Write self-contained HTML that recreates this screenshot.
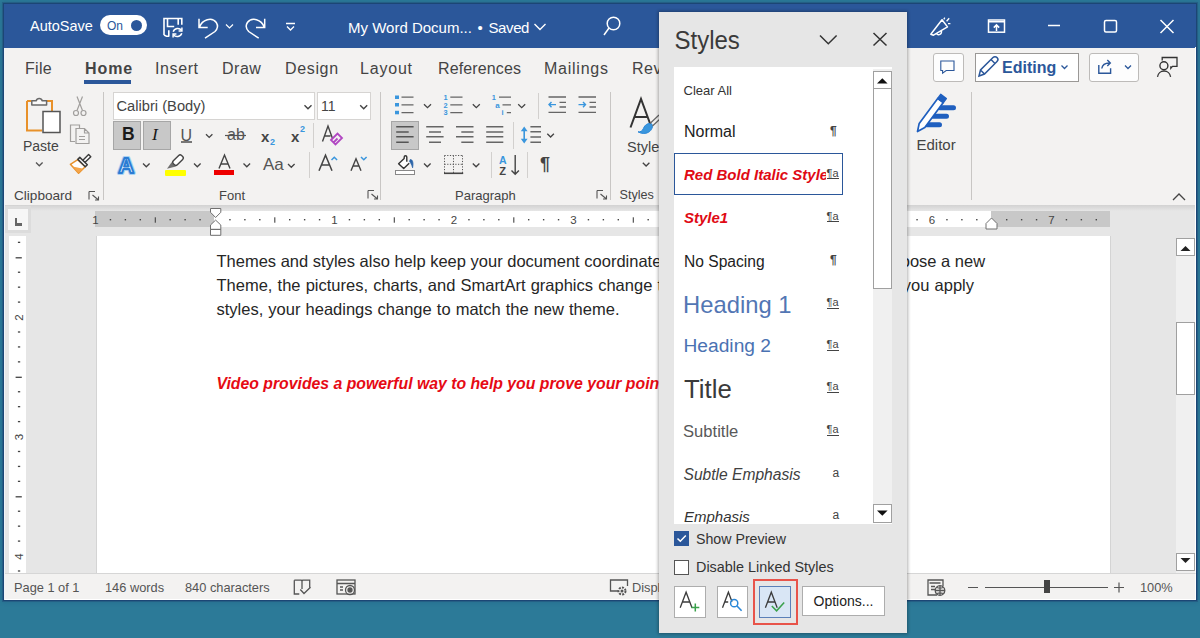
<!DOCTYPE html>
<html><head><meta charset="utf-8">
<style>
*{margin:0;padding:0;box-sizing:border-box}
html,body{width:1200px;height:638px;overflow:hidden;background:#2c7a98;font-family:"Liberation Sans",sans-serif;position:relative}
.a{position:absolute}
.t{position:absolute;white-space:nowrap;line-height:1}
svg.L{position:absolute;left:0;top:0;width:1200px;height:638px;overflow:visible}
.tab{position:absolute;top:60.5px;font-size:16px;color:#444;white-space:nowrap;line-height:1}
.lbl{position:absolute;font-size:13px;color:#444;white-space:nowrap;line-height:1}
</style></head><body>
<!-- window -->
<div class="a" style="left:4px;top:3.5px;width:1192px;height:596.5px;background:#f3f2f1;box-shadow:0 0 0 1px rgba(25,60,110,.7),0 0 0 2px rgba(30,75,120,.45),0 0 4px 2px rgba(25,70,120,.3);border-left:1px solid #eef3f8"></div>
<!-- title bar -->
<div class="a" style="left:4px;top:3.5px;width:1192px;height:44.1px;background:#2b579a"></div>
<div class="t" style="left:30px;top:18.5px;font-size:14.5px;color:#fff">AutoSave</div>
<div class="a" style="left:100px;top:15px;width:47px;height:20px;border-radius:10px;background:#fff"></div>
<div class="t" style="left:107px;top:20px;font-size:12px;color:#2b579a">On</div>
<div class="a" style="left:131px;top:19.5px;width:11px;height:11px;border-radius:50%;background:#2b579a"></div>
<div class="t" style="left:348px;top:20px;font-size:15px;color:#fff">My Word Docum...</div><div class="t" style="left:477.5px;top:20px;font-size:15px;color:#fff">•</div><div class="t" style="left:488.5px;top:20px;font-size:15px;color:#fff;letter-spacing:-0.4px">Saved</div>
<svg class="L" fill="none" stroke="#fff" stroke-width="1.5">
 <!-- save -->
 <path d="M164 35V18.5H181.8V24.7 M164 35L166.5 36.2H169.3 M167.5 18.5V26.5H174.2 M178.2 18.5V24.7 M168.8 30.3V36.2" stroke-width="1.6"/>
 <path d="M173.2 31.8A4.8 4.8 0 0 1 181.6 30.4 M181.8 33.2A4.8 4.8 0 0 1 173.4 34.6" stroke-width="1.5"/>
 <path d="M181.9 27.6V30.9H178.6 M173.1 37.4V34.1H176.4" stroke-width="1.5"/>
 <!-- undo -->
 <path d="M199 18.8v8.7h8.7 M199.6 27C202 19.5 212 16.5 216.3 22.5C218.5 26 217.5 29 215 31.5L205 38.2"/>
 <path d="M226 24.5l3.5 3.5 3.5-3.5" stroke-width="1.2"/>
 <!-- redo -->
 <path d="M264.7 18.8v8.7h-8.7 M264.1 27C261.7 19.5 251.7 16.5 247.4 22.5C245.2 26 246.2 29 248.7 31.5L258.7 38.2"/>
 <!-- customize -->
 <path d="M286 23.5h9 M287 26.5l3.5 3.5 3.5-3.5" stroke-width="1.3"/>
 <!-- title chevron -->
 <path d="M534.5 24l5.5 5.5 5.5-5.5" stroke-width="1.4"/>
 <!-- search -->
 <circle cx="613.5" cy="23.5" r="6.3"/>
 <path d="M609 28l-5 7"/>
 <!-- megaphone -->
 <path d="M930.8 34.2l11.2-14.5 5.5 7.2-14 8.3z M936.2 33.2a2.6 2.6 0 0 0 5 -2.5" stroke-linejoin="round"/>
 <path d="M943.8 19.4l1-1.8 M946.6 21.2l2.6-3 M948 23.6h2.4" stroke-width="1.3"/>
 <!-- ribbon display -->
 <rect x="988.5" y="20" width="16" height="12.2"/>
 <path d="M988.5 21.8h16 M996.5 31v-6 M993.8 27.6l2.7-2.7 2.7 2.7"/>
 <!-- min max close -->
 <path d="M1048 25.5h12"/>
 <rect x="1104.5" y="20.5" width="12" height="11.5" rx="1.5"/>
 <path d="M1160.5 20l13 13 M1173.5 20l-13 13"/>
</svg>
<!-- ribbon tabs -->
<div class="tab" style="left:25px;letter-spacing:0.3px">File</div>
<div class="tab" style="left:85px;font-weight:bold;letter-spacing:0.9px">Home</div>
<div class="a" style="left:84px;top:80px;width:47px;height:4px;background:#2b579a"></div>
<div class="tab" style="left:155px;letter-spacing:0.6px">Insert</div>
<div class="tab" style="left:222px;letter-spacing:0.5px">Draw</div>
<div class="tab" style="left:285px;letter-spacing:0.65px">Design</div>
<div class="tab" style="left:360px;letter-spacing:0.8px">Layout</div>
<div class="tab" style="left:438px;letter-spacing:0.12px">References</div>
<div class="tab" style="left:544px;letter-spacing:0.75px">Mailings</div>
<div class="tab" style="left:632px;letter-spacing:0.5px">Review</div>
<!-- right buttons -->
<div class="a" style="left:932.5px;top:52.5px;width:31.5px;height:29px;border:1px solid #bdbbb9;border-radius:3px;background:#fdfdfd"></div>
<div class="a" style="left:974.5px;top:52.5px;width:104px;height:29px;border:1px solid #9a9896;background:#fff"></div>
<div class="t" style="left:1002px;top:60px;font-size:16px;font-weight:bold;color:#2b579a">Editing</div>
<div class="a" style="left:1088.5px;top:52.5px;width:50px;height:29px;border:1px solid #bdbbb9;border-radius:3px;background:#fdfdfd"></div>
<svg class="L" fill="none" stroke="#2b579a" stroke-width="1.3">
 <path d="M940.8 61h13.2v9.5h-7.8l-3.6 2.6v-2.6h-1.8z" stroke-width="1.1"/>
 <path d="M979 76l1.5-6 12.5-12.5a2.5 2.5 0 0 1 4 4l-12.5 12.5z M991 59.5l4 4 M980.5 70l4.5 4.5" stroke-width="1.5"/>
 <path d="M1061.5 65.5l3 3 3-3" stroke-width="1.3"/>
 <path d="M1098.8 65V73.3H1110.6V68.2 M1101.8 68.5C1102.3 64.8 1105 63 1109.5 63 M1107.3 60L1110.3 63L1107.3 66" stroke-width="1.4"/>
 <path d="M1125 65.5l3 3 3-3" stroke-width="1.3"/>
</svg>
<svg class="L" fill="none" stroke="#333" stroke-width="1.4">
 <circle cx="1163.9" cy="65.8" r="4"/>
 <path d="M1157.5 76.8A6.6 6.6 0 0 1 1170.6 76.8 M1162.2 60.5V57.5H1177V66.3H1172.5L1170.8 68.3V66.3" stroke-width="1.3"/>
</svg>
<!-- ===== RIBBON ===== -->
<!-- separators -->
<div class="a" style="left:103px;top:92px;width:1px;height:108px;background:#c8c6c4"></div>
<div class="a" style="left:380px;top:92px;width:1px;height:108px;background:#c8c6c4"></div>
<div class="a" style="left:610px;top:92px;width:1px;height:108px;background:#c8c6c4"></div>
<div class="a" style="left:971px;top:92px;width:1px;height:108px;background:#c8c6c4"></div>
<div class="a" style="left:313px;top:123px;width:1px;height:25px;background:#d2d0ce"></div>
<div class="a" style="left:309px;top:152px;width:1px;height:26px;background:#d2d0ce"></div>
<div class="a" style="left:538px;top:93px;width:1px;height:26px;background:#d2d0ce"></div>
<div class="a" style="left:512.5px;top:122px;width:1px;height:27px;background:#d2d0ce"></div>
<div class="a" style="left:491px;top:152px;width:1px;height:26px;background:#d2d0ce"></div>
<div class="a" style="left:527px;top:152px;width:1px;height:26px;background:#d2d0ce"></div>
<!-- group labels -->
<div class="lbl" style="left:14px;top:188.6px;font-size:13.6px">Clipboard</div>
<div class="lbl" style="left:219px;top:189px">Font</div>
<div class="lbl" style="left:455px;top:189px">Paragraph</div>
<div class="lbl" style="left:619.5px;top:189px;font-size:12.6px">Styles</div>
<div class="lbl" style="left:23px;top:139px;font-size:14px">Paste</div>
<div class="lbl" style="left:627px;top:139.5px;font-size:14.5px">Styles</div>
<div class="lbl" style="left:916.5px;top:137px;font-size:15px">Editor</div>
<!-- font boxes -->
<div class="a" style="left:113px;top:92px;width:202px;height:28px;background:#fff;border:1px solid #d6d4d2"></div>
<div class="t" style="left:116.5px;top:98.5px;font-size:14.7px;color:#444">Calibri (Body)</div>
<div class="a" style="left:317px;top:92px;width:54px;height:28px;background:#fff;border:1px solid #d6d4d2"></div>
<div class="t" style="left:321px;top:99px;font-size:14px;color:#444">11</div>
<!-- B I -->
<div class="a" style="left:113px;top:121px;width:28px;height:29px;background:#c8c8c8;border:1px solid #a6a6a6"></div>
<div class="a" style="left:143px;top:121px;width:28px;height:29px;background:#c8c8c8;border:1px solid #a6a6a6"></div>
<div class="t" style="left:122px;top:126.2px;font-size:17.5px;font-weight:bold;color:#1a1a1a">B</div>
<div class="t" style="left:152px;top:126px;font-size:17.5px;font-style:italic;font-family:'Liberation Serif',serif;color:#1a1a1a">I</div>
<div class="t" style="left:180.5px;top:127.5px;font-size:16px;color:#555">U</div>
<div class="a" style="left:181px;top:141px;width:11px;height:1.6px;background:#777"></div>
<div class="t" style="left:227px;top:127px;font-size:16px;color:#555">ab</div>
<div class="t" style="left:261px;top:129px;font-size:15px;font-weight:bold;color:#444">x</div>
<div class="t" style="left:270px;top:138px;font-size:9px;font-weight:bold;color:#3a96dd">2</div>
<div class="t" style="left:291px;top:129px;font-size:15px;font-weight:bold;color:#444">x</div>
<div class="t" style="left:300px;top:124.5px;font-size:9px;font-weight:bold;color:#3a96dd">2</div>
<!-- highlighted align left -->
<div class="a" style="left:391px;top:121px;width:28px;height:29px;background:#c8c8c8;border:1px solid #a6a6a6"></div>
<!-- color bars -->
<div class="a" style="left:164.5px;top:170px;width:21.5px;height:5.5px;background:#ffff00;border-radius:1px"></div>
<div class="a" style="left:214px;top:170px;width:20px;height:5px;background:#e00"></div>
<div class="t" style="left:263px;top:156px;font-size:17px;color:#555">Aa</div>
<div class="t" style="left:540px;top:155px;font-size:18px;font-weight:bold;color:#444">¶</div>
<svg class="L" fill="none" stroke="#555" stroke-width="1.3">
 <!-- paste clipboard -->
 <path d="M27 101h4.5 M45.5 101h6.5v10 M27 101v29.5h15" stroke="#e8912a" stroke-width="2"/>
 <path d="M31.8 105v-4.3h4.4a3.1 3.1 0 0 1 6 0h4.4v4.3z" stroke="#6a6a6a" fill="#fafafa" stroke-width="1.5" stroke-linejoin="round"/>
 <rect x="43" y="111.5" width="17" height="21" fill="#fff" stroke="#555" stroke-width="1.5"/>
 <path d="M36 162.5l3.3 3.3 3.3-3.3" stroke="#555"/>
 <!-- scissors -->
 <g stroke="#a19f9d" stroke-width="1.2"><circle cx="76" cy="113" r="2.5"/><circle cx="83.5" cy="113" r="2.5"/><path d="M77 110.5l5.5-14 M82.5 110.5l-5.5-14"/></g>
 <!-- copy -->
 <g stroke="#a19f9d" stroke-width="1.2"><path d="M75 141.5h-4.5v-16.5h9v3"/><path d="M76 128.5h8.5l4.5 4.5v10.5h-13z M84.5 128.5v4.5h4.5 M79 136.5h6 M79 139.5h6"/></g>
 <!-- format painter -->
 <path d="M70.4 164.3L77.8 159.6L85.2 166.8L78.6 173.2Z" fill="#fff" stroke="#e8912a" stroke-width="1.5" stroke-linejoin="round"/>
 <path d="M72.6 166.4L83.4 168.8L78.6 173Z" fill="#f5a54a" stroke="none"/>
 <path d="M82.6 160.4L88.6 154.6L90.8 156.8L84.8 162.6Z" fill="#fff" stroke="#3a3a3a" stroke-width="1.4" stroke-linejoin="round"/>
 <path d="M77.8 159.4L79.8 157.4L87.3 164.7L85.3 166.7Z" fill="#fff" stroke="#3a3a3a" stroke-width="1.5" stroke-linejoin="round"/>
 <!-- launchers -->
 <path d="M89 191.5h6 M89 191.5v8 M92.5 195l6 5 M98.5 196.5v3.5h-3.5" stroke="#555" stroke-width="1.1"/>
 <path d="M368 190.5h6 M368 190.5v8 M371.5 194l6 5 M377.5 195.5v3.5h-3.5" stroke="#555" stroke-width="1.1"/>
 <path d="M597 190.5h6 M597 190.5v8 M600.5 194l6 5 M606.5 195.5v3.5h-3.5" stroke="#555" stroke-width="1.1"/>
 <!-- font dropdown chevrons -->
 <path d="M304.5 105.2l3.5 3.5 3.5-3.5 M360.2 105.2l3.5 3.5 3.5-3.5" stroke="#444" stroke-width="1.4"/>
 <!-- U chev, row chevrons -->
 <path d="M206 134.2l3.2 3.2 3.2-3.2" stroke="#444"/>
 <path d="M143 163.5l3.3 3.3 3.3-3.3 M194 163.5l3.3 3.3 3.3-3.3 M243.5 163.5l3.3 3.3 3.3-3.3 M288 164l3.3 3.3 3.3-3.3" stroke="#444"/>
 <!-- strike -->
 <path d="M225 135.5h21" stroke="#555" stroke-width="1.2"/>
 <!-- clear formatting A -->
 <path d="M322.5 141.5l5.5-15.5 4.5 12.5 M324.5 136h6" stroke="#444" stroke-width="1.4"/>
 <path d="M331 140l6.5-6.5 4.5 4.5-6.5 6.5z M333.5 142.5l4-4" stroke="#b146c2" stroke-width="1.8"/>
 <!-- text effects A -->
 <text x="118.3" y="172.6" font-family="Liberation Sans" font-weight="bold" font-size="22" fill="#d6e9f8" stroke="#a9d1f2" stroke-width="4" stroke-linejoin="round">A</text>
 <text x="118.3" y="172.6" font-family="Liberation Sans" font-weight="bold" font-size="22" fill="#eef6fd" stroke="#2b7cd3" stroke-width="2" stroke-linejoin="round">A</text>
 <!-- highlighter -->
 <path d="M167 168.8L171.6 162.2L175.9 166.5Z" fill="#6f6f6f" stroke="none"/>
 <rect x="172.2" y="157.3" width="11.6" height="5.6" rx="2" transform="rotate(-45 178 160.1)" fill="#fff" stroke="#444" stroke-width="1.4"/>
 <!-- font color A -->
 <path d="M219 168.5l5.5-13.5 5.5 13.5 M221 164h7" stroke="#444" stroke-width="1.4"/>
 <!-- grow/shrink -->
 <path d="M319 170.7l6.5-15.5 6.5 15.5 M321.5 165h8" stroke="#444" stroke-width="1.5"/>
 <path d="M331.5 160l2.8-2.8 2.8 2.8" stroke="#3a96dd" stroke-width="1.5"/>
 <path d="M351 170.7l5-12 5 12 M353 166h6" stroke="#444" stroke-width="1.4"/>
 <path d="M361 157l2.8 2.8 2.8-2.8" stroke="#3a96dd" stroke-width="1.5"/>
 <!-- bullets -->
 <g fill="#3a96dd" stroke="none"><rect x="395" y="95.5" width="4" height="3.5"/><rect x="395" y="103" width="4" height="3.5"/><rect x="395" y="110.8" width="4" height="3.5"/></g>
 <path d="M401.5 97.2h12 M401.5 104.8h12 M401.5 112.6h12" stroke="#666" stroke-width="1.3"/>
 <path d="M424 104.2l3.5 3.5 3.5-3.5 M472.8 104.2l3.5 3.5 3.5-3.5 M518.2 104.2l3.5 3.5 3.5-3.5" stroke="#444" stroke-width="1.3"/>
 <!-- numbering -->
 <path d="M450.3 97.2h12.2 M450.3 104.8h12.2 M450.3 112.6h12.2" stroke="#666" stroke-width="1.3"/>
 <g fill="#3a96dd" stroke="none" font-size="7.4" font-family="Liberation Sans" font-weight="bold"><text x="443.4" y="100.4">1</text><text x="443.4" y="107.9">2</text><text x="443.4" y="115.4">3</text></g>
 <!-- multilevel -->
 <path d="M499 97.2h12 M502.5 104.8h8.5 M506.8 112.6h4.2" stroke="#666" stroke-width="1.3"/>
 <g fill="#3a96dd" stroke="none" font-size="7.4" font-family="Liberation Sans" font-weight="bold"><text x="491.8" y="100.4">1</text><text x="495.2" y="107.9" font-size="8">a</text><text x="501.6" y="115">i</text></g>
 <!-- indents -->
 <path d="M548.5 97h17.5 M559.5 102.4h6.5 M559.5 107h6.5 M548.5 112.3h17.5" stroke="#666" stroke-width="1.3"/>
 <path d="M556 104.6h-7 M551.5 102l-2.5 2.6 2.5 2.6" stroke="#3a96dd" stroke-width="1.4"/>
 <path d="M578.5 97h17.5 M589.5 102.4h6.5 M589.5 107h6.5 M578.5 112.3h17.5" stroke="#666" stroke-width="1.3"/>
 <path d="M578.5 104.6h7 M583 102l2.5 2.6-2.5 2.6" stroke="#3a96dd" stroke-width="1.4"/>
 <!-- align -->
 <path d="M396.2 126.8h17.4 M396.2 132h12.5 M396.2 136.8h17.4 M396.2 142.2h12.5" stroke="#555" stroke-width="1.5"/>
 <path d="M426.2 126.8h17.4 M429 132h12 M426.2 136.8h17.4 M429 142.2h12" stroke="#666" stroke-width="1.5"/>
 <path d="M456 126.8h17.5 M461.3 132h12.2 M456 136.8h17.5 M461.3 142.2h12.2" stroke="#666" stroke-width="1.5"/>
 <path d="M486.2 126.8h17.1 M486.2 132h17.1 M486.2 136.8h17.1 M486.2 142.2h17.1" stroke="#666" stroke-width="1.5"/>
 <!-- line spacing -->
 <path d="M530.4 126.8h10.6 M530.4 131.8h10.6 M530.4 136.9h10.6 M530.4 142.2h10.6" stroke="#666" stroke-width="1.5"/>
 <path d="M524.2 129v12" stroke="#3a96dd" stroke-width="1.6"/>
 <path d="M520.8 131.2l3.4-4.6 3.4 4.6z M520.8 138.8l3.4 4.6 3.4-4.6z" fill="#3a96dd" stroke="none"/>
 <path d="M547.3 133.7l3.3 3.3 3.3-3.3" stroke="#444" stroke-width="1.3"/>
 <!-- shading -->
 <path d="M404.2 158.6L398.6 163.8L403.7 168.6L409.2 163.2 M404.2 158.8V157A1.3 1.3 0 0 1 406.8 157V161.8" stroke="#333" stroke-width="1.4" stroke-linejoin="round" fill="#fff"/>
 <path d="M410.2 159.6C412.4 159.3 413.6 162.2 412.6 167.8C411.8 164.5 410.6 162.8 409.6 161.6Z" fill="#2b64a8" stroke="#2b64a8" stroke-width=".8"/>
 <rect x="395.5" y="170.5" width="19" height="4" fill="#fff" stroke="#888" stroke-width="1"/>
 <path d="M424 163.5l3.3 3.3 3.3-3.3 M472.8 163.5l3.3 3.3 3.3-3.3" stroke="#444" stroke-width="1.3"/>
 <!-- borders -->
 <path d="M444.5 155.5h18 M444.5 155.5v17.5 M462.5 155.5v17.5 M453.5 155.5v17.5 M444.5 164.3h18" stroke="#555" stroke-width="1" stroke-dasharray="1.2 1.5"/>
 <path d="M444 173.3h19.2" stroke="#444" stroke-width="1.6"/>
 <!-- sort -->
 <g font-family="Liberation Sans" font-weight="bold" stroke="none"><text x="499" y="163.5" font-size="10.5" fill="#3a96dd">A</text><text x="499.2" y="174.5" font-size="11" fill="#444">Z</text></g>
 <path d="M515.2 155v19 M511.5 170.5l3.7 3.7 3.7-3.7" stroke="#444" stroke-width="1.4"/>
 <!-- styles A -->
 <path d="M630.5 127.5l10.5-28.5 10.5 28.5 M634.5 117h13" stroke="#333" stroke-width="2"/>
 <path d="M638 131.8c2.5 .5 4.5-1 5.5-3.5 1.3-3.5 4.5-5.5 8-4.5 2 2 .5 6.5-3 8.5-3 1.8-7.5 1.5-10.5-.5z" fill="#3a96dd" stroke="#2b88d8" stroke-width="1"/>
 <path d="M650 123.5l9-8.5 M652.5 126l8-7.5" stroke="#666" stroke-width="1.2"/>
 <path d="M642.8 162.7l3.3 3.3 3.3-3.3" stroke="#444" stroke-width="1.3"/>
 <!-- editor -->
 <path d="M940 107.7h13.5 M933 116.3h13.5 M926.5 124.7h13" stroke="#1f5fbf" stroke-width="5" stroke-linecap="round"/>
 <path d="M917.5 131.5l1.7-8.1 18.5-25 5.6 4.2-18.5 25z" fill="#fff" stroke="#1f5fbf" stroke-width="1.7" stroke-linejoin="round"/>
 <path d="M937.7 98.4l3-4 5.6 4.2-3 4z" fill="#1f5fbf" stroke="#1f5fbf" stroke-width="1.5" stroke-linejoin="round"/>
 <!-- collapse -->
 <path d="M1173 200l6-6 6 6" stroke="#444" stroke-width="1.3"/>
</svg>
<!-- ===== DOC AREA ===== -->
<div class="a" style="left:5px;top:205px;width:1191px;height:368px;background:#e6e6e6"></div>
<div class="a" style="left:5px;top:205px;width:1191px;height:6px;background:linear-gradient(#d2d2d2,#e6e6e6)"></div>
<!-- tab selector -->
<div class="a" style="left:5px;top:206px;width:26px;height:27px;background:#dcdcdc"></div>
<div class="a" style="left:8px;top:209px;width:20px;height:20.5px;background:#f6f6f6"></div>
<div class="a" style="left:14.5px;top:218px;width:2.2px;height:7.5px;background:#666"></div>
<div class="a" style="left:14.5px;top:223px;width:7px;height:2.5px;background:#666"></div>
<!-- horizontal ruler -->
<div class="a" style="left:95px;top:211px;width:1015px;height:16px;background:#fff"></div>
<div class="a" style="left:95px;top:211px;width:119px;height:16px;background:#c8c8c8"></div>
<div class="a" style="left:991px;top:211px;width:119px;height:16px;background:#c8c8c8"></div>
<!-- vertical ruler -->
<div class="a" style="left:9px;top:236px;width:16.5px;height:337px;background:#fff"></div>
<!-- page -->
<div class="a" style="left:97px;top:236px;width:1013px;height:337px;background:#fff;box-shadow:1px 0 0 #d4d4d4,-1px 0 0 #d4d4d4"></div>
<!-- scrollbar -->
<div class="a" style="left:1176px;top:238px;width:19.5px;height:335px;background:#f0f0f0"></div>
<div class="a" style="left:1176px;top:238px;width:19px;height:18px;background:#fff;border:1px solid #a0a0a0"></div>
<div class="a" style="left:1176px;top:322px;width:19px;height:73px;background:#fff;border:1px solid #a0a0a0"></div>
<div class="a" style="left:1176px;top:553px;width:19px;height:18px;background:#fff;border:1px solid #a0a0a0"></div>
<svg class="L" stroke="none" fill="#222">
 <path d="M1180.5 251l5-5 5 5z"/>
 <path d="M1180.5 558l5 5 5-5z"/>
</svg>
<svg class="L" fill="none" stroke="#555" stroke-width="1">
 <g fill="#444" stroke="none" font-size="11.5" font-family="Liberation Sans"><text x="95.5" y="224" text-anchor="middle">1</text><rect x="109.74" y="219" width="1.4" height="1.4"/><rect x="124.67999999999999" y="219" width="1.4" height="1.4"/><rect x="139.61" y="219" width="1.4" height="1.4"/><rect x="154.75" y="217.3" width="1.1" height="5.4"/><rect x="169.49" y="219" width="1.4" height="1.4"/><rect x="184.42000000000002" y="219" width="1.4" height="1.4"/><rect x="199.36" y="219" width="1.4" height="1.4"/><rect x="229.24" y="219" width="1.4" height="1.4"/><rect x="244.18" y="219" width="1.4" height="1.4"/><rect x="259.11" y="219" width="1.4" height="1.4"/><rect x="274.25" y="217.3" width="1.1" height="5.4"/><rect x="288.99" y="219" width="1.4" height="1.4"/><rect x="303.92" y="219" width="1.4" height="1.4"/><rect x="318.86" y="219" width="1.4" height="1.4"/><text x="334.5" y="224" text-anchor="middle">1</text><rect x="348.74" y="219" width="1.4" height="1.4"/><rect x="363.68" y="219" width="1.4" height="1.4"/><rect x="378.61" y="219" width="1.4" height="1.4"/><rect x="393.75" y="217.3" width="1.1" height="5.4"/><rect x="408.49" y="219" width="1.4" height="1.4"/><rect x="423.42" y="219" width="1.4" height="1.4"/><rect x="438.36" y="219" width="1.4" height="1.4"/><text x="454.0" y="224" text-anchor="middle">2</text><rect x="468.24" y="219" width="1.4" height="1.4"/><rect x="483.18" y="219" width="1.4" height="1.4"/><rect x="498.11" y="219" width="1.4" height="1.4"/><rect x="513.25" y="217.3" width="1.1" height="5.4"/><rect x="527.99" y="219" width="1.4" height="1.4"/><rect x="542.92" y="219" width="1.4" height="1.4"/><rect x="557.8599999999999" y="219" width="1.4" height="1.4"/><text x="573.5" y="224" text-anchor="middle">3</text><rect x="587.74" y="219" width="1.4" height="1.4"/><rect x="602.68" y="219" width="1.4" height="1.4"/><rect x="617.6099999999999" y="219" width="1.4" height="1.4"/><rect x="632.75" y="217.3" width="1.1" height="5.4"/><rect x="647.49" y="219" width="1.4" height="1.4"/><rect x="662.42" y="219" width="1.4" height="1.4"/><rect x="677.3599999999999" y="219" width="1.4" height="1.4"/><text x="693.0" y="224" text-anchor="middle">4</text><rect x="707.24" y="219" width="1.4" height="1.4"/><rect x="722.18" y="219" width="1.4" height="1.4"/><rect x="737.1099999999999" y="219" width="1.4" height="1.4"/><rect x="752.25" y="217.3" width="1.1" height="5.4"/><rect x="766.99" y="219" width="1.4" height="1.4"/><rect x="781.92" y="219" width="1.4" height="1.4"/><rect x="796.8599999999999" y="219" width="1.4" height="1.4"/><text x="812.5" y="224" text-anchor="middle">5</text><rect x="826.74" y="219" width="1.4" height="1.4"/><rect x="841.68" y="219" width="1.4" height="1.4"/><rect x="856.6099999999999" y="219" width="1.4" height="1.4"/><rect x="871.75" y="217.3" width="1.1" height="5.4"/><rect x="886.49" y="219" width="1.4" height="1.4"/><rect x="901.42" y="219" width="1.4" height="1.4"/><rect x="916.3599999999999" y="219" width="1.4" height="1.4"/><text x="932.0" y="224" text-anchor="middle">6</text><rect x="946.24" y="219" width="1.4" height="1.4"/><rect x="961.18" y="219" width="1.4" height="1.4"/><rect x="976.1099999999999" y="219" width="1.4" height="1.4"/><rect x="1005.99" y="219" width="1.4" height="1.4"/><rect x="1020.92" y="219" width="1.4" height="1.4"/><rect x="1035.86" y="219" width="1.4" height="1.4"/><text x="1051.5" y="224" text-anchor="middle">7</text><rect x="1065.74" y="219" width="1.4" height="1.4"/><rect x="1080.68" y="219" width="1.4" height="1.4"/><rect x="1095.61" y="219" width="1.4" height="1.4"/><rect x="17.9" y="241.71" width="2.3" height="1.3"/><rect x="15.6" y="257.15" width="6.2" height="1.3"/><rect x="17.9" y="271.59" width="2.3" height="1.3"/><rect x="17.9" y="286.52" width="2.3" height="1.3"/><rect x="17.9" y="301.46" width="2.3" height="1.3"/><text x="18.5" y="317.5" text-anchor="middle" dominant-baseline="central" transform="rotate(-90 18.5 317.5)">2</text><rect x="17.9" y="331.34" width="2.3" height="1.3"/><rect x="17.9" y="346.28" width="2.3" height="1.3"/><rect x="17.9" y="361.21" width="2.3" height="1.3"/><rect x="15.6" y="376.65" width="6.2" height="1.3"/><rect x="17.9" y="391.09" width="2.3" height="1.3"/><rect x="17.9" y="406.02" width="2.3" height="1.3"/><rect x="17.9" y="420.96" width="2.3" height="1.3"/><text x="18.5" y="437.0" text-anchor="middle" dominant-baseline="central" transform="rotate(-90 18.5 437.0)">3</text><rect x="17.9" y="450.84" width="2.3" height="1.3"/><rect x="17.9" y="465.78" width="2.3" height="1.3"/><rect x="17.9" y="480.71" width="2.3" height="1.3"/><rect x="15.6" y="496.15" width="6.2" height="1.3"/><rect x="17.9" y="510.59" width="2.3" height="1.3"/><rect x="17.9" y="525.52" width="2.3" height="1.3"/><rect x="17.9" y="540.4599999999999" width="2.3" height="1.3"/><text x="18.5" y="556.5" text-anchor="middle" dominant-baseline="central" transform="rotate(-90 18.5 556.5)">4</text><rect x="17.9" y="570.34" width="2.3" height="1.3"/></g><path d="M210.5 208.5H220.8V212.3L215.6 217.5L210.5 212.3Z M215.6 220.1L220.8 225V229.4H210.5V225Z M210.5 229.4H220.8V235.3H210.5Z M991.5 218L997 223.5V229H986V223.5Z" fill="#fff" stroke="#707070" stroke-width="1"/>
</svg>
<!-- doc text -->
<div class="t" style="left:216.5px;top:253px;font-size:16.5px;color:#262626">Themes and styles also help keep your document coordinated. When you click Design and choose a new</div>
<div class="t" style="left:216.5px;top:277px;font-size:16.5px;color:#262626;word-spacing:0.55px">Theme, the pictures, charts, and SmartArt graphics change to match your new theme. When you apply</div>
<div class="t" style="left:216.5px;top:301px;font-size:16.5px;color:#262626;word-spacing:0.5px">styles, your headings change to match the new theme.</div>
<div class="t" style="left:216.5px;top:376px;font-size:15.8px;color:#e60a14;font-weight:bold;font-style:italic">Video provides a powerful way to help you prove your point. When you click Online Video</div>
<!-- ===== STATUS BAR ===== -->
<div class="a" style="left:1195px;top:47px;width:1px;height:553px;background:#fff"></div>
<div class="a" style="left:5px;top:573px;width:1191px;height:27px;background:#f3f2f1;border-top:1px solid #d6d6d6;border-bottom:1px solid #fff;border-right:1px solid #fff"></div>
<div class="t" style="left:14px;top:582.2px;font-size:12.8px;color:#555">Page 1 of 1</div>
<div class="t" style="left:105px;top:582.2px;font-size:12.8px;color:#555">146 words</div>
<div class="t" style="left:185px;top:582.2px;font-size:12.8px;color:#555">840 characters</div>
<div class="t" style="left:632px;top:582.2px;font-size:12.8px;color:#555">Display Settings</div>
<div class="t" style="left:1140px;top:582.2px;font-size:12.8px;color:#555">100%</div>
<svg class="L" fill="none" stroke="#555" stroke-width="1.3">
 <path d="M294.3 580.2v13.8h5 M302 581v8 M294.3 580.2h7l.7 .8 .7-.8h7v7.5" />
 <path d="M300.3 589.5l3.7 4 6.5-6.3" />
 <rect x="337" y="580" width="18" height="14" />
 <path d="M337 583.5h18 M340 587h3 M340 590h3" />
 <circle cx="350" cy="590" r="4.5" fill="#f3f2f1"/><circle cx="350" cy="590" r="2" fill="#555"/>
 <path d="M621 591h-10.5v-11h17v6" />
 <circle cx="622" cy="591" r="3.5" fill="#f3f2f1" stroke-width="2" stroke-dasharray="2 1.2"/>
 <circle cx="622" cy="591" r="1.5" fill="#555" stroke="none"/>
 <path d="M937 595h-9v-15h15v6 M929.5 583h11 M931 586.5h4 M931 589.5h4" />
 <circle cx="940" cy="590.5" r="4.8" fill="#f3f2f1"/><path d="M935.2 590.5h9.6 M940 585.7v9.6 M937 587.5a8 8 0 0 0 6 0 M937 593.5a8 8 0 0 1 6 0"/>
 <path d="M968 587.5h10 M985 587.5h123 M1114 587.5h10 M1119 582.5v10" stroke-width="1.2"/>
</svg>
<div class="a" style="left:1044px;top:580px;width:6px;height:13px;background:#444"></div>
<!-- ===== STYLES PANE ===== -->
<div class="a" style="left:659px;top:12px;width:248px;height:621px;background:#e6e6e6;box-shadow:0 0 3px 1px rgba(0,0,0,.3)"></div>
<div class="t" style="left:674.5px;top:28.8px;font-size:24px;color:#3a3a3a;transform:scaleY(1.08);transform-origin:0 20px">Styles</div>
<svg class="L" fill="none" stroke="#333" stroke-width="1.5">
 <path d="M820 35.5l8.3 8.3 8.3-8.3"/>
 <path d="M873.5 33l13 12.5 M886.5 33l-13 12.5"/>
</svg>
<div class="a" style="left:674px;top:67px;width:218px;height:457px;background:#fff"></div>
<!-- list scrollbar -->
<div class="a" style="left:873px;top:69px;width:18.5px;height:454px;background:#f0f0f0"></div>
<div class="a" style="left:873px;top:70.5px;width:18.5px;height:18px;background:#fff;border:1px solid #a0a0a0"></div>
<div class="a" style="left:873px;top:88px;width:18.5px;height:201px;background:#fff;border:1px solid #a0a0a0"></div>
<div class="a" style="left:873px;top:504px;width:18.5px;height:18.5px;background:#fff;border:1px solid #a0a0a0"></div>
<svg class="L" stroke="none" fill="#111">
 <path d="M877 83.5l5.3-5.3 5.3 5.3z"/>
 <path d="M877 510.5l5.3 5.3 5.3-5.3z"/>
</svg>
<!-- items -->
<div class="t" style="left:683.5px;top:83.8px;font-size:13px;color:#333">Clear All</div>
<div class="t" style="left:684px;top:123.5px;font-size:16px;color:#222">Normal</div>
<div class="a" style="left:674px;top:153.3px;width:168.8px;height:42px;border:1.7px solid #2b579a"></div>
<div class="a" style="left:684px;top:160px;width:142px;height:30px;overflow:hidden"><div class="t" style="left:0;top:6.6px;font-size:15px;color:#e00a14;font-weight:bold;font-style:italic">Red Bold Italic Style</div></div>
<div class="t" style="left:684px;top:209.6px;font-size:15px;color:#e00a14;font-weight:bold;font-style:italic">Style1</div>
<div class="t" style="left:684px;top:253.5px;font-size:15.6px;color:#222">No Spacing</div>
<div class="t" style="left:683px;top:292.5px;font-size:23.8px;color:#5276b4">Heading 1</div>
<div class="t" style="left:683.5px;top:336px;font-size:19.2px;color:#4a72b2">Heading 2</div>
<div class="t" style="left:684px;top:377px;font-size:25.8px;color:#3a3a3a">Title</div>
<div class="t" style="left:683px;top:423.5px;font-size:16.6px;color:#595959">Subtitle</div>
<div class="t" style="left:683.5px;top:466.5px;font-size:15.6px;color:#404040;font-style:italic">Subtle Emphasis</div>
<div class="a" style="left:674px;top:500px;width:198px;height:23.5px;overflow:hidden"><div class="t" style="left:10px;top:8.5px;font-size:15px;color:#333;font-style:italic">Emphasis</div></div>
<!-- right markers -->
<div class="t" style="left:830px;top:125px;font-size:12px;color:#444;font-weight:bold">¶</div>
<div class="t" style="left:830px;top:254px;font-size:12px;color:#444;font-weight:bold">¶</div>
<div class="t" style="left:826.5px;top:167.5px;font-size:11px;color:#444">¶a</div>
<div class="t" style="left:826.5px;top:210.5px;font-size:11px;color:#444">¶a</div>
<div class="t" style="left:826.5px;top:297px;font-size:11px;color:#444">¶a</div>
<div class="t" style="left:826.5px;top:339px;font-size:11px;color:#444">¶a</div>
<div class="t" style="left:826.5px;top:381px;font-size:11px;color:#444">¶a</div>
<div class="t" style="left:826.5px;top:424px;font-size:11px;color:#444">¶a</div>
<div class="a" style="left:826.5px;top:177.5px;width:12.5px;height:1px;background:#444"></div>
<div class="a" style="left:826.5px;top:220.5px;width:12.5px;height:1px;background:#444"></div>
<div class="a" style="left:826.5px;top:307.5px;width:12.5px;height:1px;background:#444"></div>
<div class="a" style="left:826.5px;top:349.5px;width:12.5px;height:1px;background:#444"></div>
<div class="a" style="left:826.5px;top:391.5px;width:12.5px;height:1px;background:#444"></div>
<div class="a" style="left:826.5px;top:434.5px;width:12.5px;height:1px;background:#444"></div>
<div class="t" style="left:832.5px;top:467px;font-size:12px;color:#444">a</div>
<div class="a" style="left:832px;top:500px;width:10px;height:23.5px;overflow:hidden"><div class="t" style="left:0.5px;top:9px;font-size:12px;color:#444">a</div></div>
<!-- checkboxes -->
<div class="a" style="left:674px;top:531px;width:15px;height:15px;background:#2b579a"></div>
<svg class="L" fill="none" stroke="#fff" stroke-width="1.5"><path d="M677.5 538.5l2.8 2.8 5.5-5.8"/></svg>
<div class="t" style="left:696px;top:532px;font-size:14.2px;color:#333">Show Preview</div>
<div class="a" style="left:674px;top:559.5px;width:15px;height:15px;background:#fff;border:1px solid #555"></div>
<div class="t" style="left:696px;top:560px;font-size:14.4px;color:#333">Disable Linked Styles</div>
<!-- buttons -->
<div class="a" style="left:674px;top:586px;width:31.5px;height:32px;background:#fff;border:1px solid #adadad"></div>
<div class="a" style="left:716.5px;top:586px;width:31.5px;height:32px;background:#fff;border:1px solid #adadad"></div>
<div class="a" style="left:752.5px;top:579px;width:45.5px;height:46px;border:2.5px solid #e8544a"></div>
<div class="a" style="left:759px;top:586px;width:32px;height:32px;background:#d9e6f5;border:1px solid #5b80b8"></div>
<div class="a" style="left:802px;top:586px;width:82.5px;height:30px;background:#fff;border:1px solid #adadad"></div>
<div class="t" style="left:813.5px;top:594px;font-size:14px;color:#222">Options...</div>
<svg class="L" fill="none" stroke="#333" stroke-width="1.3">
 <path d="M680.2 607.8l5.9-15.6 5.9 15.6 M682.4 602h7.4" stroke="#3c3c3c"/>
 <path d="M691.3 607.6h8 M695.3 603.6v8" stroke="#3aa14b" stroke-width="1.5"/>
 <path d="M722.5 607.8l5.9-15.6 3.6 9.5 M724.7 602h3.5" stroke="#3c3c3c"/>
 <circle cx="734.2" cy="603.2" r="3.6" stroke="#2b88d8" stroke-width="1.5"/>
 <path d="M736.8 605.8l4.8 5" stroke="#2b88d8" stroke-width="1.6"/>
 <path d="M765.4 607.8l5.9-15.6 5.9 15.6 M767.6 602h7.4" stroke="#3c3c3c"/>
 <path d="M771.8 606l4.8 4.8 7.6-8.2" stroke="#3aa14b" stroke-width="1.5"/>
</svg>
</body></html>
